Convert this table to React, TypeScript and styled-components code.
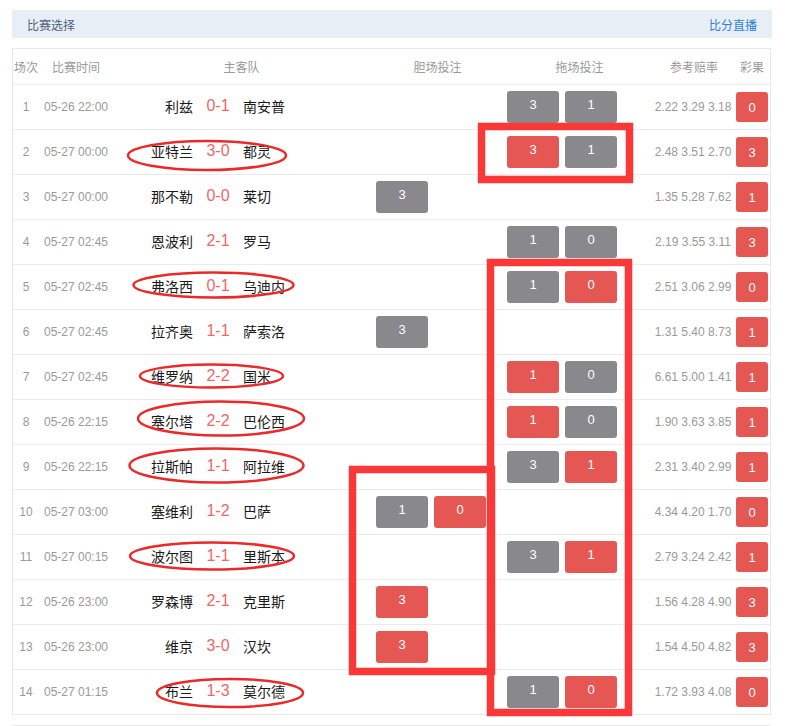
import React from "react";
import styled, { createGlobalStyle } from "styled-components";

const GlobalStyle = createGlobalStyle`
  html, body { margin: 0; padding: 0; background: #ffffff; }
  body { font-family: "Liberation Sans", "Noto Sans CJK SC", sans-serif; }
`;

type Tone = "gray" | "red";
type Pick = { v: string; tone: Tone };
type Match = {
  no: number;
  time: string;
  home: string;
  score: string;
  away: string;
  banker?: Pick[];
  drag?: Pick[];
  odds: string;
  result: string;
};

const g = (v: string): Pick => ({ v, tone: "gray" });
const r = (v: string): Pick => ({ v, tone: "red" });

const matches: Match[] = [
  { no: 1, time: "05-26 22:00", home: "利兹", score: "0-1", away: "南安普", drag: [g("3"), g("1")], odds: "2.22 3.29 3.18", result: "0" },
  { no: 2, time: "05-27 00:00", home: "亚特兰", score: "3-0", away: "都灵", drag: [r("3"), g("1")], odds: "2.48 3.51 2.70", result: "3" },
  { no: 3, time: "05-27 00:00", home: "那不勒", score: "0-0", away: "莱切", banker: [g("3")], odds: "1.35 5.28 7.62", result: "1" },
  { no: 4, time: "05-27 02:45", home: "恩波利", score: "2-1", away: "罗马", drag: [g("1"), g("0")], odds: "2.19 3.55 3.11", result: "3" },
  { no: 5, time: "05-27 02:45", home: "弗洛西", score: "0-1", away: "乌迪内", drag: [g("1"), r("0")], odds: "2.51 3.06 2.99", result: "0" },
  { no: 6, time: "05-27 02:45", home: "拉齐奥", score: "1-1", away: "萨索洛", banker: [g("3")], odds: "1.31 5.40 8.73", result: "1" },
  { no: 7, time: "05-27 02:45", home: "维罗纳", score: "2-2", away: "国米", drag: [r("1"), g("0")], odds: "6.61 5.00 1.41", result: "1" },
  { no: 8, time: "05-26 22:15", home: "塞尔塔", score: "2-2", away: "巴伦西", drag: [r("1"), g("0")], odds: "1.90 3.63 3.85", result: "1" },
  { no: 9, time: "05-26 22:15", home: "拉斯帕", score: "1-1", away: "阿拉维", drag: [g("3"), r("1")], odds: "2.31 3.40 2.99", result: "1" },
  { no: 10, time: "05-27 03:00", home: "塞维利", score: "1-2", away: "巴萨", banker: [g("1"), r("0")], odds: "4.34 4.20 1.70", result: "0" },
  { no: 11, time: "05-27 00:15", home: "波尔图", score: "1-1", away: "里斯本", drag: [g("3"), r("1")], odds: "2.79 3.24 2.42", result: "1" },
  { no: 12, time: "05-26 23:00", home: "罗森博", score: "2-1", away: "克里斯", banker: [r("3")], odds: "1.56 4.28 4.90", result: "3" },
  { no: 13, time: "05-26 23:00", home: "维京", score: "3-0", away: "汉坎", banker: [r("3")], odds: "1.54 4.50 4.82", result: "3" },
  { no: 14, time: "05-27 01:15", home: "布兰", score: "1-3", away: "莫尔德", drag: [g("1"), r("0")], odds: "1.72 3.93 4.08", result: "0" },
];

const COLS = "26px 74px 257px 135px 149px 80px 36px";

const Page = styled.div`
  position: relative;
  width: 788px;
  height: 726px;
  overflow: hidden;
  padding: 10px 16px 0 12px;
  box-sizing: border-box;
`;

const TitleBar = styled.div`
  height: 28px;
  background: #e8eef6;
  display: flex;
  align-items: center;
  justify-content: space-between;
  padding: 0 15px;
  font-size: 12px;
`;

const TitleText = styled.span`
  color: #4f5f7c;
`;

const TitleLink = styled.a`
  color: #2a7fd9;
  text-decoration: none;
`;

const Table = styled.div`
  margin-top: 10px;
  width: 759px;
  border: 1px solid #e8e8e8;
  border-bottom: none;
  box-sizing: border-box;
`;

const HeadRow = styled.div`
  display: grid;
  grid-template-columns: ${COLS};
  height: 35px;
  border-bottom: 1px solid #ebebeb;
  font-size: 12px;
  color: #999999;
`;

const HeadCell = styled.div`
  display: flex;
  align-items: center;
  justify-content: center;
  white-space: nowrap;
`;

const Row = styled.div`
  display: grid;
  grid-template-columns: ${COLS};
  height: 44px;
  border-bottom: 1px solid #ebebeb;
  align-items: center;
`;

const Muted = styled.div`
  text-align: center;
  font-size: 12px;
  color: #9a9a9a;
  white-space: nowrap;
`;

const Teams = styled.div`
  display: grid;
  grid-template-columns: 80px 50px 1fr;
  align-items: center;
  font-size: 14px;
  color: #1a1a1a;
  padding-bottom: 3px;
`;

const Home = styled.span`
  text-align: right;
  white-space: nowrap;
`;

const Away = styled.span`
  text-align: left;
  white-space: nowrap;
`;

const Score = styled.span`
  text-align: center;
  font-family: "Liberation Sans", sans-serif;
  font-size: 16px;
  color: #f26666;
`;

const Picks = styled.div<{ $pl: number }>`
  display: flex;
  gap: 6px;
  padding-left: ${(p) => p.$pl}px;
`;

const PickBtn = styled.div<{ $tone: Tone }>`
  width: 52px;
  height: 32px;
  border-radius: 3px;
  background: ${(p) => (p.$tone === "red" ? "#e45752" : "#88888d")};
  color: #ffffff;
  font-size: 13px;
  line-height: 28px;
  text-align: center;
`;

const Odds = styled.div`
  text-align: center;
  padding-right: 2px;
  font-family: "Liberation Sans Narrow", "Arial Narrow", "Liberation Sans", sans-serif;
  font-size: 12px;
  color: #9a9a9a;
  white-space: nowrap;
`;

const Result = styled.div`
  width: 32px;
  height: 30px;
  margin-left: 2px;
  border-radius: 3px;
  background: #e45752;
  color: #ffffff;
  font-size: 13px;
  display: flex;
  align-items: center;
  justify-content: center;
`;

const NextBlock = styled.div`
  margin-top: 10px;
  width: 759px;
  border-top: 1px solid #e8e8e8;
  height: 10px;
`;

const Overlay = styled.svg`
  position: absolute;
  left: 0;
  top: 0;
  pointer-events: none;
`;

const ellipses = [
  { cx: 207, cy: 155.5, rx: 79, ry: 14.5 },
  { cx: 213.5, cy: 285, rx: 80, ry: 12.5 },
  { cx: 211.5, cy: 376, rx: 71.5, ry: 11.5 },
  { cx: 221, cy: 418.5, rx: 83, ry: 17 },
  { cx: 216.5, cy: 465.5, rx: 87, ry: 17 },
  { cx: 212, cy: 556, rx: 82, ry: 13.5 },
  { cx: 230, cy: 693, rx: 73, ry: 14 },
];

const rects = [
  { x: 481.5, y: 126.5, w: 148, h: 53 },
  { x: 490.5, y: 262.5, w: 138, h: 450 },
  { x: 352.5, y: 469.5, w: 139, h: 202 },
];

export default function App() {
  return (
    <>
      <GlobalStyle />
      <Page>
        <TitleBar>
          <TitleText>比赛选择</TitleText>
          <TitleLink href="#">比分直播</TitleLink>
        </TitleBar>
        <Table>
          <HeadRow>
            <HeadCell>场次</HeadCell>
            <HeadCell>比赛时间</HeadCell>
            <HeadCell>主客队</HeadCell>
            <HeadCell>胆场投注</HeadCell>
            <HeadCell>拖场投注</HeadCell>
            <HeadCell>参考赔率</HeadCell>
            <HeadCell>彩果</HeadCell>
          </HeadRow>
          {matches.map((m) => (
            <Row key={m.no}>
              <Muted>{m.no}</Muted>
              <Muted>{m.time}</Muted>
              <Teams>
                <Home>{m.home}</Home>
                <Score>{m.score}</Score>
                <Away>{m.away}</Away>
              </Teams>
              <Picks $pl={6}>
                {m.banker?.map((p, i) => (
                  <PickBtn key={i} $tone={p.tone}>{p.v}</PickBtn>
                ))}
              </Picks>
              <Picks $pl={2}>
                {m.drag?.map((p, i) => (
                  <PickBtn key={i} $tone={p.tone}>{p.v}</PickBtn>
                ))}
              </Picks>
              <Odds>{m.odds}</Odds>
              <Result>{m.result}</Result>
            </Row>
          ))}
        </Table>
        <NextBlock />
        <Overlay width={788} height={726} viewBox="0 0 788 726">
          {ellipses.map((e, i) => (
            <ellipse key={i} cx={e.cx} cy={e.cy} rx={e.rx} ry={e.ry} fill="none" stroke="#ea2a2a" strokeWidth={2.5} />
          ))}
          {rects.map((b, i) => (
            <rect key={i} x={b.x} y={b.y} width={b.w} height={b.h} fill="none" stroke="#fb3838" strokeWidth={7.5} />
          ))}
        </Overlay>
      </Page>
    </>
  );
}
